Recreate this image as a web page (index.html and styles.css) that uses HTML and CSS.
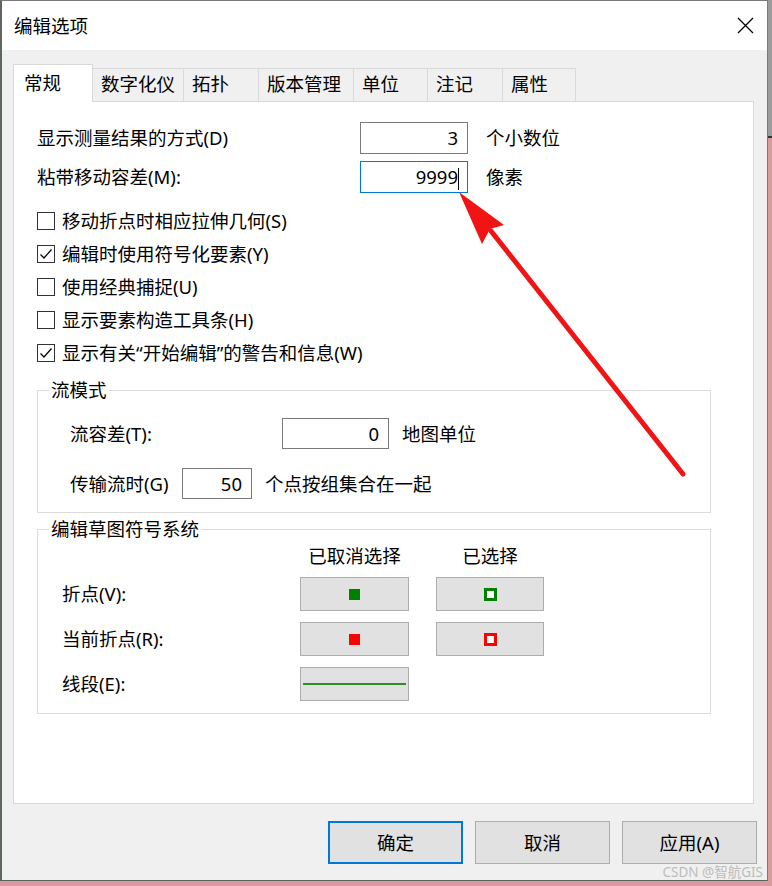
FILE: index.html
```html
<!DOCTYPE html>
<html lang="zh-CN">
<head>
<meta charset="utf-8">
<title>编辑选项</title>
<link rel="stylesheet" href="styles.css">
</head>
<body>
<div class="desk-strip"></div>
<div class="dialog">
  <div class="titlebar">
    <span class="title">编辑选项</span>
    <svg class="close" width="17" height="17" viewBox="0 0 17 17"><path d="M1 1L16 16M16 1L1 16" stroke="#000" stroke-width="1.3" fill="none"/></svg>
  </div>
  <div class="body">
    <div class="tabs">
      <div class="tab active t1">常规</div>
      <div class="tab t2">数字化仪</div>
      <div class="tab t3">拓扑</div>
      <div class="tab t4">版本管理</div>
      <div class="tab t5">单位</div>
      <div class="tab t6">注记</div>
      <div class="tab t7">属性</div>
    </div>
    <div class="panel">
      <div class="fields">
        <span class="lbl">显示测量结果的方式(D)</span>
        <div class="field">3</div>
        <span class="unit">个小数位</span>
        <span class="lbl">粘带移动容差(M):</span>
        <div class="field focus">9999<span class="caret"></span></div>
        <span class="unit">像素</span>
      </div>
      <div class="checks">
        <div class="check"><span class="box"></span><span>移动折点时相应拉伸几何(S)</span></div>
        <div class="check"><span class="box"><svg width="16" height="16" viewBox="0 0 16 16"><path d="M2.5 8.5L6 12L13.5 3.5" stroke="#000" stroke-width="1.2" fill="none"/></svg></span><span>编辑时使用符号化要素(Y)</span></div>
        <div class="check"><span class="box"></span><span>使用经典捕捉(U)</span></div>
        <div class="check"><span class="box"></span><span>显示要素构造工具条(H)</span></div>
        <div class="check"><span class="box"><svg width="16" height="16" viewBox="0 0 16 16"><path d="M2.5 8.5L6 12L13.5 3.5" stroke="#000" stroke-width="1.2" fill="none"/></svg></span><span>显示有关“开始编辑”的警告和信息(W)</span></div>
      </div>
      <fieldset class="group flow">
        <legend>流模式</legend>
        <div class="flow-body">
          <div class="flow-row">
            <span class="lbl-a">流容差(T):</span>
            <div class="field fa">0</div>
            <span class="unit-s">地图单位</span>
          </div>
          <div class="flow-row">
            <span class="lbl-b">传输流时(G)</span>
            <div class="field fb">50</div>
            <span class="unit-s">个点按组集合在一起</span>
          </div>
        </div>
      </fieldset>
      <fieldset class="group sketch">
        <legend>编辑草图符号系统</legend>
        <div class="sym">
          <span></span>
          <span class="hdr">已取消选择</span>
          <span class="hdr">已选择</span>
          <span>折点(V):</span>
          <div class="symbtn"><span class="dot green"></span></div>
          <div class="symbtn"><span class="ring green"></span></div>
          <span>当前折点(R):</span>
          <div class="symbtn"><span class="dot red"></span></div>
          <div class="symbtn"><span class="ring red"></span></div>
          <span>线段(E):</span>
          <div class="symbtn"><span class="seg"></span></div>
          <span></span>
        </div>
      </fieldset>
    </div>
  </div>
  <div class="footer">
    <div class="btn default">确定</div>
    <div class="btn">取消</div>
    <div class="btn">应用(A)</div>
  </div>
</div>
<svg class="arrow" width="772" height="886" viewBox="0 0 772 886">
  <path d="M683 474L491 231" stroke="#f01414" stroke-width="5" stroke-linecap="round" fill="none"/>
  <polygon points="459,192 504,225 490,229 482,244" fill="#f01414"/>
</svg>
<div class="watermark">CSDN @智航GIS</div>
</body>
</html>
```

FILE: styles.css
```css
html {
  background: #d99c9e;
}
body {
  margin: 0;
  width: 772px;
  height: 886px;
  overflow: hidden;
  font-family: "Noto Sans", "Noto Sans CJK SC", sans-serif;
  font-size: 18.5px;
  line-height: 24px;
  color: #000;
}
.desk-strip {
  position: absolute;
  top: 0;
  right: 0;
  width: 4px;
  height: 136px;
  background: #9c9c9c;
  border-bottom: 2px solid #333;
}
.dialog {
  width: 768px;
  height: 881px;
  box-sizing: border-box;
  border: 1px solid #7a7a7a;
  border-left: 2px solid #5d675d;
  border-bottom-color: #5f5f5f;
  background: #f0f0f0;
  display: flex;
  flex-direction: column;
}
.titlebar {
  flex: none;
  height: 49px;
  background: #fff;
  display: flex;
  align-items: center;
  justify-content: space-between;
  padding: 0 13px 0 12px;
}
.close {
  display: block;
}
.body {
  padding: 14px 13px 0 11px;
}
.tabs {
  height: 37px;
  display: flex;
  align-items: flex-end;
}
.tab {
  box-sizing: border-box;
  height: 33px;
  border: 1px solid #d9d9d9;
  border-bottom: none;
  background: #f0f0f0;
  padding-left: 8px;
  margin-left: -1px;
  line-height: 29px;
  white-space: nowrap;
}
.tab.active {
  height: 38px;
  background: #fff;
  margin-bottom: -1px;
  margin-left: 0;
  padding-left: 10px;
  line-height: 36px;
  position: relative;
  z-index: 1;
}
.t1 { width: 80px; }
.t2 { width: 92px; }
.t3 { width: 76px; }
.t4 { width: 96px; }
.t5 { width: 75px; }
.t6 { width: 76px; }
.t7 { width: 74px; }
.panel {
  box-sizing: border-box;
  height: 703px;
  background: #fff;
  border: 1px solid #d9d9d9;
  padding: 20px 0 0 23px;
}
.fields {
  display: grid;
  grid-template-columns: 305px 108px auto;
  column-gap: 18px;
  row-gap: 7px;
  align-items: center;
}
.field {
  box-sizing: border-box;
  height: 32px;
  border: 1px solid #7a7a7a;
  background: #fff;
  text-align: right;
  padding-right: 9px;
  line-height: 30px;
}
.field.focus {
  border-color: #0078d7;
}
.caret {
  display: inline-block;
  width: 1px;
  height: 22px;
  background: #000;
  vertical-align: middle;
  margin-right: -1px;
}
.checks {
  margin-top: 11px;
}
.check {
  height: 33px;
  display: flex;
  align-items: center;
  gap: 7px;
}
.box {
  width: 18px;
  height: 18px;
  box-sizing: border-box;
  border: 1px solid #333;
  background: #fff;
  display: flex;
}
.group {
  width: 674px;
  box-sizing: border-box;
  margin: 10px 0 0 0;
  padding: 0;
  border: 1px solid #dcdcdc;
  min-inline-size: auto;
}
.group legend {
  margin-left: 11px;
  padding: 0 2px;
  line-height: 22px;
}
.sketch {
  margin-top: 5px;
}
.flow-body {
  padding: 17px 0 13px 32px;
  display: flex;
  flex-direction: column;
  gap: 19px;
}
.flow-row {
  display: flex;
  align-items: center;
}
.flow-row .field {
  height: 31px;
  line-height: 29px;
}
.lbl-a { width: 212px; }
.lbl-b { width: 112px; }
.fa { width: 107px; }
.fb { width: 70px; }
.unit-s { margin-left: 13px; }
.sym {
  display: grid;
  grid-template-columns: 211px 109px 108px;
  grid-template-rows: 26px 34px 34px 34px;
  column-gap: 27px;
  row-gap: 11px;
  padding: 0 0 12px 24px;
  align-items: center;
}
.hdr {
  align-self: end;
  text-align: center;
  line-height: 20px;
}
.symbtn {
  height: 34px;
  box-sizing: border-box;
  background: #e1e1e1;
  border: 1px solid #adadad;
  display: flex;
  align-items: center;
  justify-content: center;
}
.dot {
  width: 11px;
  height: 11px;
}
.dot.green { background: #008000; }
.dot.red { background: #ff0000; }
.ring {
  width: 13px;
  height: 13px;
  box-sizing: border-box;
  border: 3px solid;
  background: #fff;
}
.ring.green { border-color: #008000; }
.ring.red { border-color: #ff0000; }
.seg {
  flex: 1;
  height: 2px;
  margin: 0 2px;
  background: #2e8b2e;
}
.footer {
  display: flex;
  justify-content: flex-end;
  gap: 12px;
  padding: 17px 10px 0 0;
}
.btn {
  width: 135px;
  height: 43px;
  box-sizing: border-box;
  background: #e1e1e1;
  border: 1px solid #adadad;
  display: flex;
  align-items: center;
  justify-content: center;
}
.btn.default {
  border: 2px solid #0078d7;
}
.arrow {
  position: absolute;
  top: 0;
  left: 0;
  pointer-events: none;
}
.watermark {
  position: absolute;
  right: 9px;
  bottom: 6px;
  font-size: 13.5px;
  line-height: 16px;
  color: #bcbcbc;
}
```
